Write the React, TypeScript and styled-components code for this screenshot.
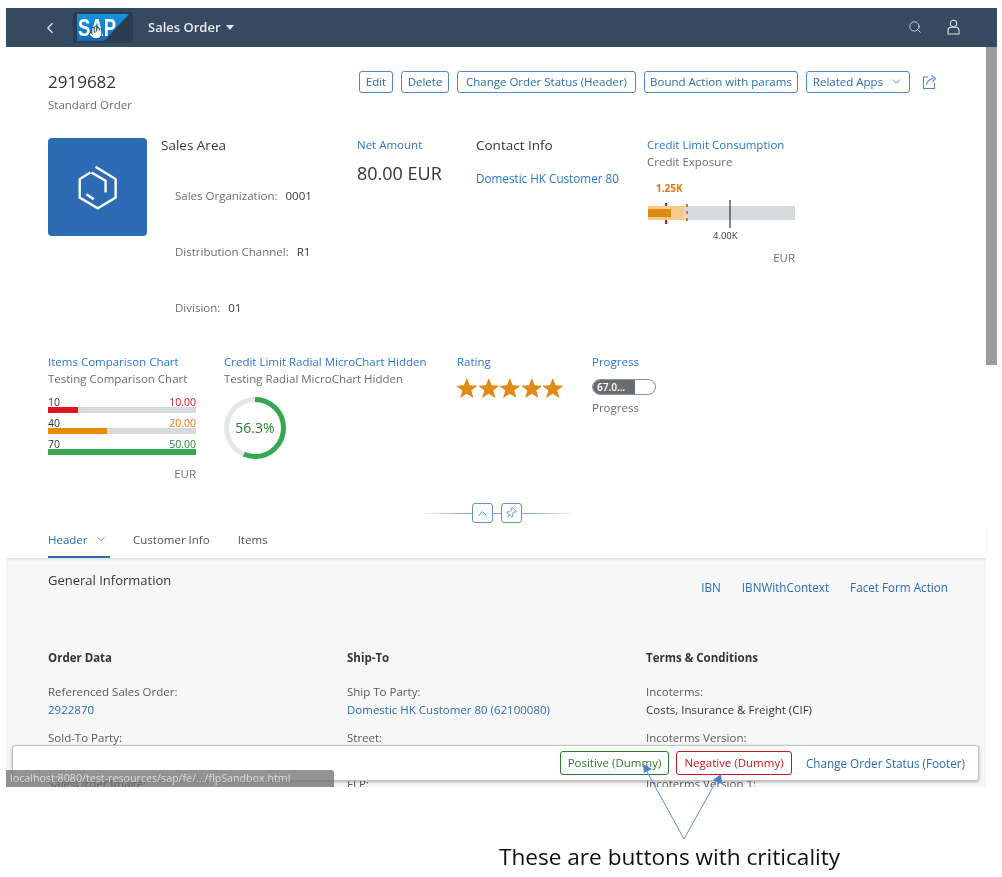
import styled, { createGlobalStyle } from 'styled-components';
import { ChevronDown, ChevronLeft, ChevronUp, Hand, Pin, Search } from 'lucide-react';

const GlobalStyle = createGlobalStyle`
  html, body { margin: 0; padding: 0; background: #fff; }
  body { font-family: "Open Sans", "Liberation Sans", sans-serif; color: #32363a; font-size: 12px; }
  * { box-sizing: border-box; }
`;

const Page = styled.div`
  position: relative;
  width: 1002px;
  height: 877px;
  padding: 8px 5px 0 6px;
  overflow: hidden;
  filter: blur(0.45px);
`;

const Frame = styled.div`
  position: relative;
  height: 779px;
  overflow: hidden;
`;

const ShellBar = styled.header`
  display: flex;
  align-items: center;
  height: 39px;
  padding-left: 35px;
  background: #354a5f;
  color: #e6ebf0;
`;

const BackButton = styled.span`
  display: flex;
  width: 32px;
`;

const LogoBox = styled.div`
  position: relative;
  display: flex;
  align-items: center;
  justify-content: center;
  width: 60px;
  height: 31px;
  border-radius: 3px;
  background: #2b3d50;
`;

const Cursor = styled.span`
  position: absolute;
  left: 15px;
  top: 13px;
  display: flex;
  color: #2b3d50;
`;

const ShellTitle = styled.div`
  display: flex;
  align-items: center;
  gap: 5px;
  margin: 0 0 2px 15px;
  font-size: 13px;
  font-weight: 600;
`;

const Caret = styled.span`
  width: 0;
  height: 0;
  margin-top: 1px;
  border-left: 4.5px solid transparent;
  border-right: 4.5px solid transparent;
  border-top: 5px solid #e6ebf0;
`;

const ShellActions = styled.div`
  display: flex;
  align-items: center;
  gap: 24px;
  margin: 0 0 1px auto;
  padding-right: 36px;
  color: #d8dfe6;
`;

const Body = styled.div`
  display: flex;
  align-items: flex-start;
`;

const Main = styled.main`
  width: 980px;
`;

const ScrollThumb = styled.div`
  width: 11px;
  height: 318px;
  background: #9b9b9b;
`;

const ObjectHeader = styled.section`
  padding: 24px 0 0 42px;
`;

const TitleRow = styled.div`
  display: flex;
  justify-content: space-between;
  height: 67px;
`;

const ObjectTitle = styled.div`
  font-size: 17px;
  line-height: 22px;
`;

const ObjectSubtitle = styled.div`
  margin-top: 4px;
  color: #6a6d70;
  font-size: 11.5px;
  line-height: 16px;
`;

const ActionBar = styled.div`
  display: flex;
  align-items: center;
  gap: 8px;
  height: 22px;
  padding-right: 48px;
`;

const GhostButton = styled.button<{ $tone?: string; $width?: number }>`
  display: inline-flex;
  align-items: center;
  justify-content: center;
  gap: 7px;
  width: ${p => (p.$width ? `${p.$width}px` : 'auto')};
  height: ${p => (p.$tone ? 24 : 22)}px;
  padding: 0 0 1px;
  border: 1px solid ${p => p.$tone || '#4f8ac8'};
  border-radius: 3px;
  background: #fff;
  color: ${p => p.$tone || '#2a6cb0'};
  font: 11.5px "Open Sans", "Liberation Sans", sans-serif;
  white-space: nowrap;
`;

const ShareIcon = styled.svg`
  margin-left: 4px;
`;

const FacetRow = styled.div<{ $height: number }>`
  display: flex;
  height: ${p => p.$height}px;
`;

const Facet = styled.div<{ $width: number }>`
  width: ${p => p.$width}px;
  flex: none;
`;

const AreaFacet = styled.div`
  display: flex;
  gap: 14px;
  width: 309px;
  flex: none;
`;

const ImageTile = styled.div`
  display: flex;
  align-items: center;
  justify-content: center;
  width: 99px;
  height: 98px;
  border-radius: 4px;
  background: #2b6cb4;
`;

const FacetHeading = styled.div`
  font-size: 13.5px;
  line-height: 14px;
`;

const AreaFields = styled.div`
  display: flex;
  flex-direction: column;
  gap: 40px;
  padding: 36px 0 0 14px;
`;

const AreaField = styled.div`
  display: flex;
  gap: 8px;
  font-size: 11.5px;
  line-height: 16px;
  color: #32363a;
`;

const MutedLabel = styled.span`
  color: #6a6d70;
`;

const FacetLink = styled.div`
  color: #2a76cf;
  font-size: 11.5px;
  line-height: 14px;
  white-space: nowrap;
`;

const AmountValue = styled.div`
  margin-top: 9px;
  font-size: 18px;
  line-height: 24px;
`;

const ContactLink = styled(FacetLink)`
  margin-top: 18px;
  font-size: 11.7px;
  line-height: 16px;
`;

const FacetSub = styled.div`
  margin-top: 2px;
  color: #6a6d70;
  font-size: 11.5px;
  line-height: 16px;
  white-space: nowrap;
`;

const ChartSvg = styled.svg`
  display: block;
  margin-top: 10px;
  overflow: visible;
`;

const UnitLabel = styled.div<{ $width: number }>`
  width: ${p => p.$width}px;
  color: #6a6d70;
  font-size: 11.5px;
  line-height: 16px;
  text-align: right;
`;

const CompareList = styled.div`
  display: flex;
  flex-direction: column;
  gap: 5px;
  width: 148px;
  margin-top: 10px;
  margin-bottom: 11px;
`;

const CompareHead = styled.div<{ $color: string }>`
  display: flex;
  justify-content: space-between;
  font-size: 10.5px;
  line-height: 10px;
  color: ${p => p.$color};
`;

const CompareName = styled.span`
  color: #32363a;
`;

const CompareTrack = styled.div`
  height: 6px;
  background: #d5dadc;
`;

const CompareFill = styled.div<{ $color: string }>`
  height: 100%;
  background: ${p => p.$color};
`;

const StarRow = styled.div`
  display: flex;
  margin-top: 8px;
  margin-left: -1px;
`;

const ProgressTrack = styled.div`
  display: flex;
  width: 64px;
  height: 16px;
  margin-top: 10px;
  border: 1px solid #89919a;
  border-radius: 8px;
  overflow: hidden;
  background: #fff;
`;

const ProgressFill = styled.div`
  padding-left: 4px;
  background: #6a6d70;
  color: #fff;
  font-size: 10px;
  font-weight: 600;
  line-height: 14px;
`;

const ProgressCaption = styled(FacetSub)`
  margin-top: 5px;
`;

const ToggleRow = styled.div`
  display: flex;
  align-items: center;
  justify-content: center;
  gap: 8px;
  width: 155px;
  height: 20px;
  margin-left: 372px;
  padding-right: 2px;
  background: linear-gradient(90deg, transparent, #7ea6d2 30%, #7ea6d2 70%, transparent) center / 100% 1px no-repeat;
`;

const ToggleButton = styled.span`
  display: flex;
  align-items: center;
  justify-content: center;
  width: 21px;
  height: 20px;
  border: 1px solid #5c93cc;
  border-radius: 3px;
  background: #fff;
  color: #3f7fc0;
`;

const TabBar = styled.nav`
  position: relative;
  display: flex;
  gap: 28px;
  height: 35px;
  padding-left: 42px;
  box-shadow: 0 2px 2px rgba(0, 0, 0, 0.08);
`;

const Tab = styled.div<{ $active?: boolean }>`
  display: flex;
  align-items: center;
  gap: 6px;
  width: ${p => (p.$active ? '62px' : 'auto')};
  margin-right: ${p => (p.$active ? '-5px' : '0')};
  padding-bottom: 1px;
  font-size: 11.5px;
  color: ${p => (p.$active ? '#2a6cb0' : '#4f5357')};
  border-bottom: 2px solid ${p => (p.$active ? '#2a6cb0' : 'transparent')};
`;

const Section = styled.section`
  height: 300px;
  padding: 13px 38px 0 42px;
  background: #f7f7f7;
`;

const SectionHead = styled.div`
  display: flex;
  justify-content: space-between;
  height: 79px;
`;

const SectionTitle = styled.div`
  font-size: 13px;
  line-height: 18px;
`;

const SectionActions = styled.div`
  display: flex;
  gap: 21px;
  padding-top: 8px;
`;

const SectionAction = styled.span`
  color: #2a6cb0;
  font-size: 11.7px;
  line-height: 16px;
`;

const FormGrid = styled.div`
  display: grid;
  grid-template-columns: repeat(3, 299px);
`;

const GroupTitle = styled.div`
  height: 34px;
  font-size: 11.5px;
  font-weight: 700;
  line-height: 16px;
`;

const FieldLabel = styled.div`
  height: 18px;
  color: #555a5e;
  font-size: 11.5px;
  line-height: 16px;
`;

const FieldValue = styled.div<{ $link?: boolean }>`
  height: 28px;
  color: ${p => (p.$link ? '#2a6cb0' : '#32363a')};
  font-size: 11.5px;
  line-height: 16px;
`;

const FloatingFooter = styled.footer`
  position: absolute;
  left: 6px;
  top: 737px;
  display: flex;
  align-items: center;
  justify-content: flex-end;
  gap: 7px;
  width: 967px;
  height: 36px;
  padding-right: 13px;
  border: 1px solid #c4c4c4;
  border-radius: 3px;
  background: #fff;
  box-shadow: 0 1px 3px rgba(0, 0, 0, 0.3);
`;

const FooterLink = styled.span`
  margin: 0 0 1px 7px;
  color: #2a6cb0;
  font-size: 11.7px;
`;

const StatusUrl = styled.div`
  position: absolute;
  left: 0;
  top: 762px;
  width: 328px;
  height: 17px;
  padding-left: 4px;
  border-radius: 0 3px 0 0;
  background: rgba(105, 105, 105, 0.72);
  color: #dcdcdc;
  font-size: 10.7px;
  line-height: 17px;
  white-space: nowrap;
`;

const Callout = styled.svg`
  position: absolute;
  left: 0;
  top: 0;
  pointer-events: none;
`;

const CalloutText = styled.div`
  margin: 55px 0 0 493px;
  color: #111;
  font-size: 22.6px;
  line-height: 30px;
  white-space: nowrap;
`;

const salesArea = [
  { label: 'Sales Organization:', value: '0001' },
  { label: 'Distribution Channel:', value: 'R1' },
  { label: 'Division:', value: '01' },
];

const comparison = [
  { name: '10', value: '10.00', pct: 20, color: '#e0141e', text: '#d6141e' },
  { name: '40', value: '20.00', pct: 40, color: '#e78c07', text: '#e9730c' },
  { name: '70', value: '50.00', pct: 100, color: '#36a852', text: '#2b7d2b' },
];

const formColumns = [
  {
    title: 'Order Data',
    rows: [
      { label: 'Referenced Sales Order:', value: '2922870', link: true },
      { label: 'Sold-To Party:', value: '' },
      { label: 'SalesOrder Image:', value: '' },
    ],
  },
  {
    title: 'Ship-To',
    rows: [
      { label: 'Ship To Party:', value: 'Domestic HK Customer 80 (62100080)', link: true },
      { label: 'Street:', value: '' },
      { label: 'FLP:', value: '' },
    ],
  },
  {
    title: 'Terms & Conditions',
    rows: [
      { label: 'Incoterms:', value: 'Costs, Insurance & Freight (CIF)' },
      { label: 'Incoterms Version:', value: '' },
      { label: 'Incoterms Version 1:', value: '' },
    ],
  },
];

function SapLogo() {
  return (
    <svg width="52" height="27" viewBox="0 0 52 27">
      <defs>
        <linearGradient id="sapBlue" x1="0" y1="0" x2="0" y2="1">
          <stop offset="0" stopColor="#1a94e0" />
          <stop offset="1" stopColor="#0a6ec0" />
        </linearGradient>
      </defs>
      <polygon points="0,0 52,0 27,27 0,27" fill="url(#sapBlue)" />
      <text x="1" y="22" fill="#fff" fontFamily="Liberation Sans" fontWeight="700" fontSize="24" textLength="38" lengthAdjust="spacingAndGlyphs">SAP</text>
    </svg>
  );
}

function Star() {
  return (
    <svg width="21.6" height="22" viewBox="0 0 24 24">
      <polygon points="12,1 15.2,9 23.8,9.4 17,14.8 19.4,23 12,18.3 4.6,23 7,14.8 0.2,9.4 8.8,9" fill="#df8a12" />
    </svg>
  );
}

function BulletChart() {
  return (
    <ChartSvg width="148" height="70" viewBox="0 0 148 70">
      <text x="9" y="12" fill="#e9730c" fontSize="10" fontWeight="700" fontFamily="Open Sans">1.25K</text>
      <rect x="1" y="26" width="147" height="14" fill="#d5dadc" />
      <rect x="1" y="26" width="35" height="14" fill="#f8c98a" />
      <rect x="1" y="29" width="23" height="8" fill="#df8a12" />
      <path d="M19 23v3M19 40v4" stroke="#d6141e" strokeWidth="2" />
      <path d="M40 24v20" stroke="#e9730c" strokeWidth="2" strokeDasharray="3 4" />
      <path d="M83 20v28" stroke="#32363a" strokeWidth="1.2" />
      <text x="66" y="59" fill="#32363a" fontSize="9.5" fontFamily="Open Sans">4.00K</text>
    </ChartSvg>
  );
}

function RadialChart() {
  const circumference = 2 * Math.PI * 28.5;
  return (
    <ChartSvg width="62" height="62" viewBox="0 0 62 62">
      <circle cx="31" cy="31" r="28.5" fill="none" stroke="#e5e8e9" strokeWidth="5" />
      <circle
        cx="31"
        cy="31"
        r="28.5"
        fill="none"
        stroke="#36a852"
        strokeWidth="5"
        strokeDasharray={`${circumference * 0.563} ${circumference}`}
        transform="rotate(-90 31 31)"
      />
      <text x="31" y="36" textAnchor="middle" fill="#2b7d2b" fontSize="14" fontFamily="Open Sans">56.3%</text>
    </ChartSvg>
  );
}

export default function App() {
  return (
    <Page>
      <GlobalStyle />
      <Frame>
        <ShellBar>
          <BackButton><ChevronLeft size={18} strokeWidth={1.6} /></BackButton>
          <LogoBox>
            <SapLogo />
            <Cursor><Hand size={15} strokeWidth={1.6} fill="#fff" /></Cursor>
          </LogoBox>
          <ShellTitle>Sales Order<Caret /></ShellTitle>
          <ShellActions>
            <Search size={14} strokeWidth={1.5} />
            <svg width="15" height="16" viewBox="0 0 15 16" fill="none" stroke="#d8dfe6" strokeWidth="1.1">
              <circle cx="7.5" cy="4.5" r="3.2" />
              <path d="M2 15v-3.5q0-2.5 2.5-3.2h6q2.5.7 2.5 3.2V15z" />
            </svg>
          </ShellActions>
        </ShellBar>
        <Body>
          <Main>
            <ObjectHeader>
              <TitleRow>
                <div>
                  <ObjectTitle>2919682</ObjectTitle>
                  <ObjectSubtitle>Standard Order</ObjectSubtitle>
                </div>
                <ActionBar>
                  <GhostButton $width={34}>Edit</GhostButton>
                  <GhostButton $width={48}>Delete</GhostButton>
                  <GhostButton $width={179}>Change Order Status (Header)</GhostButton>
                  <GhostButton $width={154}>Bound Action with params</GhostButton>
                  <GhostButton $width={104}>Related Apps<ChevronDown size={13} strokeWidth={1.4} /></GhostButton>
                  <ShareIcon width="16" height="16" viewBox="0 0 16 16" fill="none" stroke="#4a8ad0" strokeWidth="1.1">
                    <path d="M6 3H1.5v11.5h11V9M4.5 11q.5-5.5 7-6.5M9.5 1.5l4 3-3 3.5" />
                  </ShareIcon>
                </ActionBar>
              </TitleRow>
              <FacetRow $height={217}>
                <AreaFacet>
                  <ImageTile>
                    <svg width="42" height="47" viewBox="110 100 125 140" fill="none" stroke="#fff" strokeWidth="7">
                      <path d="M150 125 118 145v55l54 32 53-32v-55l-60-37" />
                      <path d="M153 125l42 25v35M138 190l22 15" />
                    </svg>
                  </ImageTile>
                  <div>
                    <FacetHeading>Sales Area</FacetHeading>
                    <AreaFields>
                      {salesArea.map(f => (
                        <AreaField key={f.label}><MutedLabel>{f.label}</MutedLabel> {f.value}</AreaField>
                      ))}
                    </AreaFields>
                  </div>
                </AreaFacet>
                <Facet $width={119}>
                  <FacetLink>Net Amount</FacetLink>
                  <AmountValue>80.00 EUR</AmountValue>
                </Facet>
                <Facet $width={171}>
                  <FacetHeading>Contact Info</FacetHeading>
                  <ContactLink>Domestic HK Customer 80</ContactLink>
                </Facet>
                <Facet $width={160}>
                  <FacetLink>Credit Limit Consumption</FacetLink>
                  <FacetSub>Credit Exposure</FacetSub>
                  <BulletChart />
                  <UnitLabel $width={148}>EUR</UnitLabel>
                </Facet>
              </FacetRow>
              <FacetRow $height={148}>
                <Facet $width={176}>
                  <FacetLink>Items Comparison Chart</FacetLink>
                  <FacetSub>Testing Comparison Chart</FacetSub>
                  <CompareList>
                    {comparison.map(c => (
                      <div key={c.name}>
                        <CompareHead $color={c.text}>
                          <CompareName>{c.name}</CompareName>
                          {c.value}
                        </CompareHead>
                        <CompareTrack>
                          <CompareFill $color={c.color} style={{ width: `${c.pct}%` }} />
                        </CompareTrack>
                      </div>
                    ))}
                  </CompareList>
                  <UnitLabel $width={148}>EUR</UnitLabel>
                </Facet>
                <Facet $width={233}>
                  <FacetLink>Credit Limit Radial MicroChart Hidden</FacetLink>
                  <FacetSub>Testing Radial MicroChart Hidden</FacetSub>
                  <RadialChart />
                </Facet>
                <Facet $width={135}>
                  <FacetLink>Rating</FacetLink>
                  <StarRow>{[0, 1, 2, 3, 4].map(i => <Star key={i} />)}</StarRow>
                </Facet>
                <Facet $width={100}>
                  <FacetLink>Progress</FacetLink>
                  <ProgressTrack>
                    <ProgressFill style={{ width: '67%' }}>67.0...</ProgressFill>
                  </ProgressTrack>
                  <ProgressCaption>Progress</ProgressCaption>
                </Facet>
              </FacetRow>
              <ToggleRow>
                <ToggleButton><ChevronUp size={15} strokeWidth={1.4} /></ToggleButton>
                <ToggleButton><Pin size={12} strokeWidth={1.5} style={{ transform: 'rotate(40deg)' }} /></ToggleButton>
              </ToggleRow>
            </ObjectHeader>
            <TabBar>
              <Tab $active>Header<ChevronDown size={14} strokeWidth={1.3} /></Tab>
              <Tab>Customer Info</Tab>
              <Tab>Items</Tab>
            </TabBar>
            <Section>
              <SectionHead>
                <SectionTitle>General Information</SectionTitle>
                <SectionActions>
                  <SectionAction>IBN</SectionAction>
                  <SectionAction>IBNWithContext</SectionAction>
                  <SectionAction>Facet Form Action</SectionAction>
                </SectionActions>
              </SectionHead>
              <FormGrid>
                {formColumns.map(col => (
                  <div key={col.title}>
                    <GroupTitle>{col.title}</GroupTitle>
                    {col.rows.map(r => (
                      <div key={r.label}>
                        <FieldLabel>{r.label}</FieldLabel>
                        <FieldValue $link={r.link}>{r.value}</FieldValue>
                      </div>
                    ))}
                  </div>
                ))}
              </FormGrid>
            </Section>
          </Main>
          <ScrollThumb />
        </Body>
        <FloatingFooter>
          <GhostButton $tone="#2b7d2b" $width={109}>Positive (Dummy)</GhostButton>
          <GhostButton $tone="#c9141e" $width={116}>Negative (Dummy)</GhostButton>
          <FooterLink>Change Order Status (Footer)</FooterLink>
        </FloatingFooter>
        <StatusUrl>localhost:8080/test-resources/sap/fe/.../flpSandbox.html</StatusUrl>
      </Frame>
      <CalloutText>These are buttons with criticality</CalloutText>
      <Callout width="1002" height="877" viewBox="0 0 1002 877">
        <path d="M645 768 684 839 718 778" fill="none" stroke="#5f8bd0" strokeWidth="1" />
        <polygon points="643,764 652,769 644,773" fill="#4a7fd0" />
        <polygon points="721,774 722,784 713,780" fill="#4a7fd0" />
      </Callout>
    </Page>
  );
}
